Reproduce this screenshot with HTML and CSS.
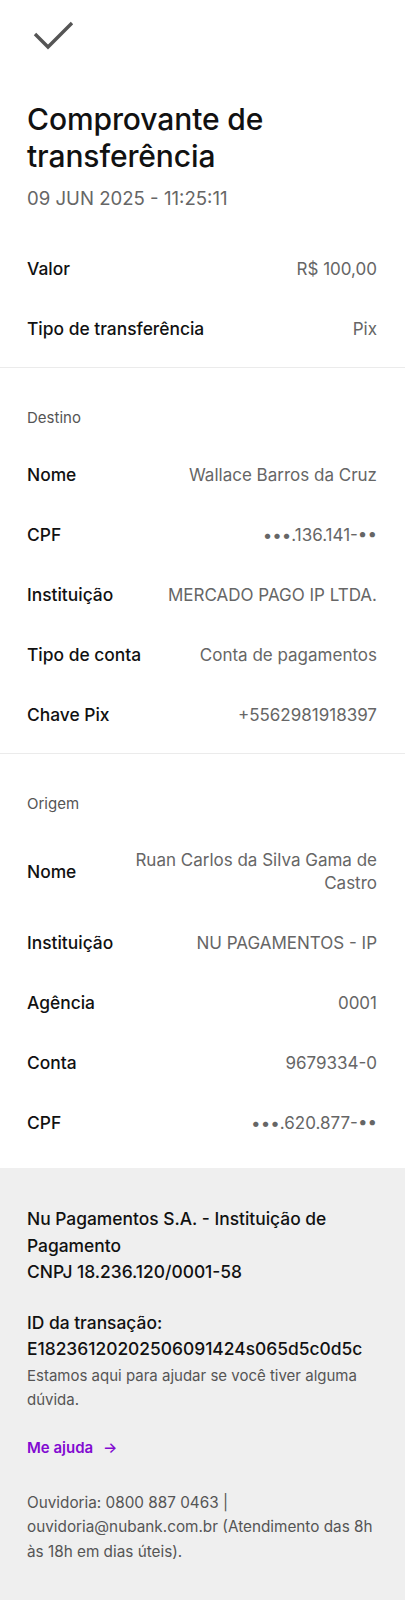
FILE: index.html
```html
<!DOCTYPE html>
<html lang="pt-BR">
<head>
<meta charset="utf-8">
<title>Comprovante de transferência</title>
<link rel="stylesheet" href="styles.css">
</head>
<body>
<main class="page">
  <header class="top">
    <svg class="check" width="42" height="30" viewBox="0 0 42 30" aria-hidden="true">
      <polyline points="2,13 15,26 39,2" fill="none" stroke="#555" stroke-width="3.4"/>
    </svg>
    <h1 class="title">Comprovante de transferência</h1>
    <p class="date">09 JUN 2025 - 11:25:11</p>
  </header>

  <section class="section first">
    <div class="row"><span class="label">Valor</span><span class="value">R$ 100,00</span></div>
    <div class="row"><span class="label">Tipo de transferência</span><span class="value">Pix</span></div>
  </section>

  <section class="section">
    <h2 class="subtitle">Destino</h2>
    <div class="row"><span class="label">Nome</span><span class="value">Wallace Barros da Cruz</span></div>
    <div class="row"><span class="label">CPF</span><span class="value">•••.136.141-••</span></div>
    <div class="row"><span class="label">Instituição</span><span class="value">MERCADO PAGO IP LTDA.</span></div>
    <div class="row"><span class="label">Tipo de conta</span><span class="value">Conta de pagamentos</span></div>
    <div class="row"><span class="label">Chave Pix</span><span class="value">+5562981918397</span></div>
  </section>

  <section class="section last">
    <h2 class="subtitle">Origem</h2>
    <div class="row"><span class="label">Nome</span><span class="value">Ruan Carlos da Silva Gama de Castro</span></div>
    <div class="row"><span class="label">Instituição</span><span class="value">NU PAGAMENTOS - IP</span></div>
    <div class="row"><span class="label">Agência</span><span class="value">0001</span></div>
    <div class="row"><span class="label">Conta</span><span class="value">9679334-0</span></div>
    <div class="row"><span class="label">CPF</span><span class="value">•••.620.877-••</span></div>
  </section>

  <footer class="footer">
    <p class="company">Nu Pagamentos S.A. - Instituição de Pagamento<br>CNPJ 18.236.120/0001-58</p>
    <p class="txid">ID da transação:<br>E18236120202506091424s065d5c0d5c</p>
    <p class="help">Estamos aqui para ajudar se você tiver alguma dúvida.</p>
    <a class="helplink" href="#">Me ajuda <span class="arrow">→</span></a>
    <p class="ombuds">Ouvidoria: 0800 887 0463 | ouvidoria@nubank.com.br (Atendimento das 8h às 18h em dias úteis).</p>
  </footer>
</main>
</body>
</html>
```

FILE: styles.css
```css
* { box-sizing: border-box; }
html, body { margin: 0; padding: 0; background: #fff; }
body {
  font-family: "Inter", "Roboto", "Liberation Sans", sans-serif;
  color: #111;
  -webkit-font-smoothing: antialiased;
}
.page { display: flex; flex-direction: column; min-height: 1600px; }

.top { padding: 21px 28px 0 27px; }
.check { display: block; margin-left: 6px; }
.title {
  margin: 50px 0 0;
  font-size: 30px;
  line-height: 37px;
  font-weight: 500;
  letter-spacing: -0.1px;
  width: 270px;
}
.date {
  margin: 11px 0 0;
  font-size: 18.6px;
  line-height: 24px;
  color: #666;
}

.section {
  padding: 0 28px 8px 27px;
  border-bottom: 1px solid #ebebeb;
}
.section.first { padding-top: 29px; }
.section.last { border-bottom: none; padding-bottom: 15px; }

.subtitle {
  margin: 0;
  padding: 40px 0 17px;
  font-size: 15px;
  line-height: 20px;
  font-weight: 400;
  color: #555;
}

.row {
  display: flex;
  justify-content: space-between;
  align-items: center;
  gap: 24px;
  padding: 18px 0;
  min-height: 59.7px;
}
.label {
  flex: none;
  font-size: 17.4px;
  line-height: 24px;
  font-weight: 500;
  color: #111;
}
.value {
  font-size: 17px;
  line-height: 23px;
  color: #666;
  text-align: right;
}

.footer {
  flex: 1;
  background: #efefef;
  padding: 38px 28px 40px 27px;
}
.company, .txid {
  margin: 0;
  font-size: 17.4px;
  line-height: 26.5px;
  font-weight: 500;
  color: #111;
}
.txid { margin-top: 24px; }
.help {
  margin: 1px 0 0;
  font-size: 15px;
  line-height: 24px;
  color: #555;
}
.helplink {
  display: inline-block;
  margin-top: 24px;
  font-size: 15px;
  line-height: 24px;
  font-weight: 600;
  color: #820ad1;
  text-decoration: none;
}
.arrow { margin-left: 6px; font-weight: 500; }
.ombuds {
  margin: 31px 0 0;
  font-size: 15.3px;
  line-height: 24.5px;
  color: #555;
}
```
